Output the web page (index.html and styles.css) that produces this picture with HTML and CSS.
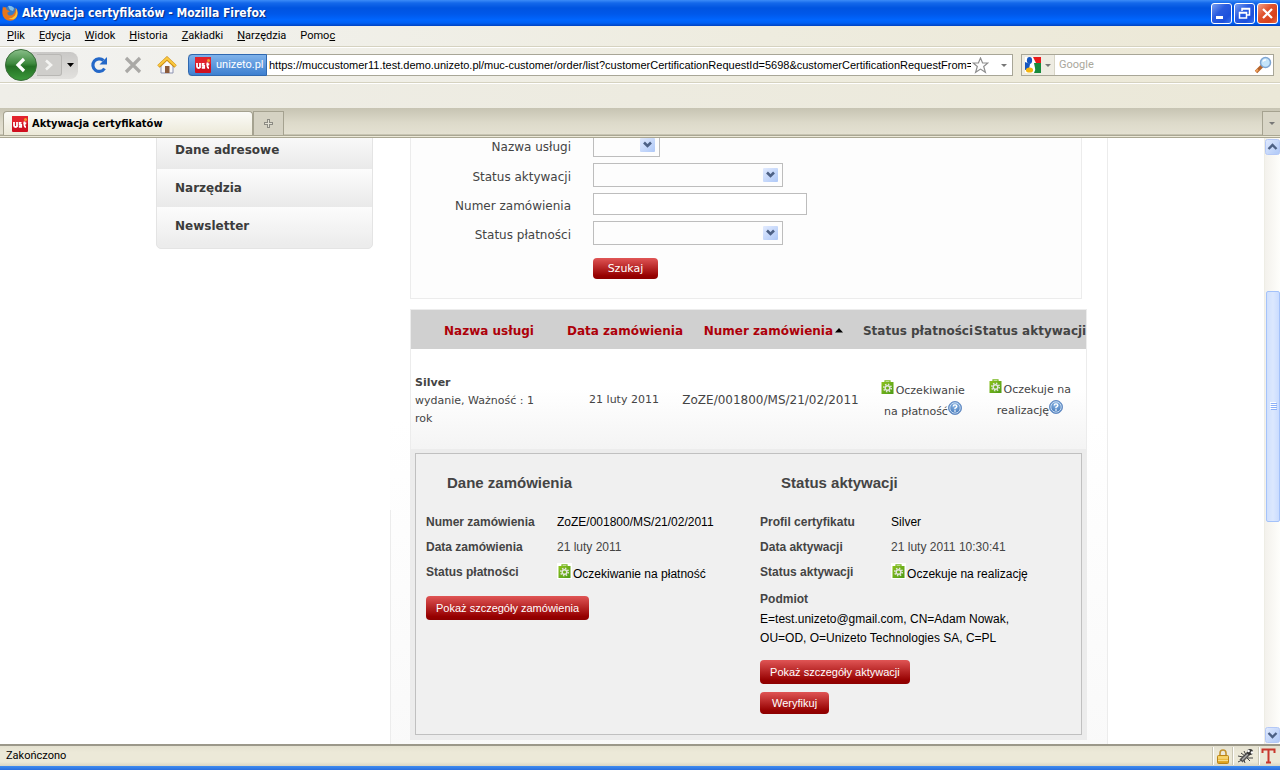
FILE: index.html
```html
<!DOCTYPE html>
<html lang="pl">
<head>
<meta charset="utf-8">
<title>Aktywacja certyfikatów</title>
<link rel="stylesheet" href="styles.css">
</head>
<body>
<svg class="defs" aria-hidden="true">
  <defs>
    <linearGradient id="gGreen" x1="0" y1="0" x2="0" y2="1"><stop offset="0" stop-color="#8abf8a"/><stop offset=".45" stop-color="#3f8a3f"/><stop offset=".55" stop-color="#247024"/><stop offset="1" stop-color="#3c9a3c"/></linearGradient>
    <linearGradient id="gSel" x1="0" y1="0" x2="1" y2="1"><stop offset="0" stop-color="#e1eafe"/><stop offset="1" stop-color="#aec8f7"/></linearGradient>
    <linearGradient id="gCase" x1="0" y1="0" x2="1" y2="1"><stop offset="0" stop-color="#8cc21c"/><stop offset="1" stop-color="#4c9a18"/></linearGradient>
    <radialGradient id="gHelp" cx=".5" cy=".3" r=".8"><stop offset="0" stop-color="#8fb9e6"/><stop offset="1" stop-color="#2f66ae"/></radialGradient>
    <linearGradient id="gLock" x1="0" y1="0" x2="0" y2="1"><stop offset="0" stop-color="#fbd967"/><stop offset="1" stop-color="#d99a18"/></linearGradient>
  </defs>
  <symbol id="drop" viewBox="0 0 15 14"><rect width="15" height="14" rx="1" fill="url(#gSel)"/><path d="M4 4.500l3.500 3.500 3.500-3.500" fill="none" stroke="#4d6185" stroke-width="2.600"/></symbol>
  <symbol id="uni" viewBox="0 0 16 16"><rect width="16" height="16" rx="1" fill="#cf1020"/><rect width="16" height="7" rx="1" fill="#e2222c"/><path d="M2 6v3.500q0 1.500 1.500 1.500T5 9.500V6v5M9.500 6.800H7.600V8.800H9.200V10.800H6.800M12.500 5.500v4q0 1.500 1.500 1.500M11.300 7.300h3" fill="none" stroke="#fff" stroke-width="1.800"/><circle cx="13.500" cy="3.500" r="1.500" fill="#f39a28"/></symbol>
  <symbol id="case" viewBox="0 0 13 14"><path d="M4 3V.8h5V3" fill="none" stroke="#78b820" stroke-width="1.200"/><rect x=".5" y="2" width="12" height="12" fill="url(#gCase)"/><circle cx="6.500" cy="8" r="3.700" fill="none" stroke="#e2e6dc" stroke-width="1.600" stroke-dasharray="1.450 1.450"/><circle cx="6.500" cy="8" r="2.300" fill="none" stroke="#e2e6dc" stroke-width="1.500"/></symbol>
  <symbol id="help" viewBox="0 0 14 14"><circle cx="7" cy="7" r="6.500" fill="url(#gHelp)" stroke="#6a8fc4"/><circle cx="7" cy="7" r="5.200" fill="none" stroke="#c8dcf2"/><path d="M5.200 5.500Q5.300 3.900 7 3.900t1.800 1.500Q8.800 6.400 7 7.300V8.200M7 9.300v1.400" fill="none" stroke="#fff" stroke-width="1.400"/></symbol>
</svg>

<header class="titlebar">
  <svg width="16" height="16" viewBox="0 0 16 16" aria-hidden="true"><circle cx="8" cy="7.500" r="6.500" fill="#3d7cc4"/><path d="M6 1q3-1 6 2l-1 3-3-1z" fill="#7fc0ee"/><path d="M1.500 2.500L1 1Q.2 5 .4 8.500A7.600 7.600 0 0 0 15.600 8Q15.600 4.500 13.500 2.500 14 6 12 8.500 10 11 7.500 10.500 5 10 5.500 7.500L8 6.500 4.500 4.500 3.500 2z" fill="#e8761c"/><path d="M13.500 2.500q1.600 4-.5 8-3 3.500-7 2.500 6 3.500 9-2 1.500-5-1.500-8.500z" fill="#f9c33a"/></svg>
  <h1 class="window-title">Aktywacja certyfikatów - Mozilla Firefox</h1>
  <div class="window-buttons">
    <button class="wbtn" aria-label="Minimalizuj"><svg width="19" height="19" viewBox="0 0 19 19"><path d="M4 13.500h7" stroke="#fff" stroke-width="3"/></svg></button>
    <button class="wbtn" aria-label="Przywróć"><svg width="19" height="19" viewBox="0 0 19 19" fill="none" stroke="#fff"><path d="M7 7V4.500h7.500V11H12M7 5h7.500M4.500 8.500h7V14h-7zM4.500 9h7" stroke-width="1.500"/></svg></button>
    <button class="wbtn wbtn-close" aria-label="Zamknij"><svg width="19" height="19" viewBox="0 0 19 19"><path d="M5 5l9 9M14 5l-9 9" stroke="#fff" stroke-width="2.200"/></svg></button>
  </div>
</header>

<nav class="menubar" aria-label="Menu">
  <button><u>P</u>lik</button><button><u>E</u>dycja</button><button><u>W</u>idok</button><button><u>H</u>istoria</button><button><u>Z</u>akładki</button><button><u>N</u>arzędzia</button><button>Pomo<u>c</u></button>
</nav>

<div class="toolbar">
  <div class="history">
    <button class="back" aria-label="Wstecz"><svg width="32" height="32" viewBox="0 0 32 32"><circle cx="16" cy="16" r="15.500" fill="url(#gGreen)" stroke="#3c6e3c"/><path d="M19 10l-6 6 6 6" fill="none" stroke="#fff" stroke-width="3.200"/></svg></button>
    <button class="forward" aria-label="Dalej"><svg width="12" height="14" viewBox="0 0 12 14"><path d="M3 2.500L8 7l-5 4.500" fill="none" stroke="#f4f4f2" stroke-width="2.600"/></svg></button>
    <button class="recent" aria-label="Ostatnie strony"><svg width="7" height="4" viewBox="0 0 7 4"><path d="M0 0h7L3.500 4z"/></svg></button>
  </div>
  <button class="tool" aria-label="Odśwież"><svg width="18" height="18" viewBox="0 0 18 18"><path d="M14.500 12.500A6.300 6.300 0 1 1 13.500 4.500" fill="none" stroke="#2468c8" stroke-width="3.200"/><path d="M17 1v7.500H9.500z" fill="#2468c8"/></svg></button>
  <button class="tool" aria-label="Zatrzymaj"><svg width="18" height="18" viewBox="0 0 18 18"><path d="M2 2l14 14M16 2L2 16" stroke="#aaa9a6" stroke-width="3.200"/></svg></button>
  <button class="tool" aria-label="Strona startowa"><svg width="20" height="18" viewBox="0 0 20 18"><path d="M4 9l6-6 6 6v8H4z" fill="#f7f7fb" stroke="#8d93b0"/><path d="M1.500 10.500L10 2.500l8.500 8" fill="none" stroke="#c98a12" stroke-width="3.600"/><path d="M1.500 10L10 2.300 18.500 10" fill="none" stroke="#fbc93f" stroke-width="2.200"/><rect x="8" y="10" width="4.500" height="7" fill="#8b5a3a"/></svg></button>
  <div class="urlbar">
    <button class="identity"><svg width="16" height="16" viewBox="0 0 16 16"><use href="#uni"/></svg>unizeto.pl</button>
    <input class="url" type="text" aria-label="Adres" value="https://muccustomer11.test.demo.unizeto.pl/muc-customer/order/list?customerCertificationRequestId=5698&amp;customerCertificationRequestFrom=">
    <svg width="17" height="17" viewBox="0 0 17 17" aria-hidden="true"><path d="M8.500 1l2.100 5h5.200l-4.100 3.500 1.700 5.800-4.900-3.200-4.900 3.200 1.700-5.800L1.200 6h5.200z" fill="#fdfdfd" stroke="#8e8e8e" stroke-width="1.200"/></svg>
    <svg width="6" height="3" viewBox="0 0 6 3" aria-hidden="true"><path d="M0 0h6L3 3z" fill="#777"/></svg>
  </div>
  <div class="searchbar">
    <button class="engine" aria-label="Wyszukiwarka"><svg width="16" height="16" viewBox="0 0 16 16"><path fill="#fff" d="M0 0h16v16H0z"/><path d="M8 0h8v6h-5z" fill="#e91a1a"/><path d="M9 6h7v10H9q2-3 1-5z" fill="#178a3c"/><path d="M0 5l5 2-1 5-4 1z" fill="#1456c0"/><ellipse cx="4.500" cy="3.500" rx="2.600" ry="3.400" fill="#1456c0"/><ellipse cx="4.500" cy="13" rx="3.600" ry="2.600" fill="#f6b50e"/></svg><svg width="6" height="3" viewBox="0 0 6 3"><path d="M0 0h6L3 3z" fill="#777"/></svg></button>
    <input type="text" aria-label="Szukaj w Google" placeholder="Google">
    <svg width="18" height="18" viewBox="0 0 18 18" aria-hidden="true"><path d="M2 16l6-6" stroke="#b5632a" stroke-width="3.400"/><path d="M2 15.500L4 13.500" stroke="#f0a05a" stroke-width="2"/><circle cx="11.500" cy="6.500" r="5" fill="#c4e4fa" stroke="#7fa6d2" stroke-width="1.500"/><path d="M9 5.500q1-2 3-1.500" stroke="#fff" fill="none" stroke-width="1.500"/></svg>
  </div>
</div>
<div class="bookmarks"></div>

<div class="tabs">
  <button class="tab"><svg width="16" height="16" viewBox="0 0 16 16"><use href="#uni"/></svg>Aktywacja certyfikatów</button>
  <button class="newtab" aria-label="Nowa karta"><svg width="9" height="9" viewBox="0 0 9 9"><path d="M4.500 0v9M0 4.500h9" stroke="#8c8b83" stroke-width="3"/><path d="M4.500 1v7M1 4.500h7" stroke="#e4e2d6"/></svg></button>
  <button class="alltabs" aria-label="Lista kart"><svg width="6" height="3" viewBox="0 0 6 3"><path d="M0 0h6L3 3z" fill="#777"/></svg></button>
</div>

<div class="viewport">
  <div class="page">
    <nav class="side" aria-label="Konto">
      <a href="#adres">Dane adresowe</a>
      <a href="#narzedzia">Narzędzia</a>
      <a href="#newsletter">Newsletter</a>
    </nav>
    <main class="main">
      <form class="search-form">
        <label for="usluga">Nazwa usługi</label>
        <span class="select select-s"><select id="usluga"><option></option></select><svg width="15" height="14"><use href="#drop"/></svg></span>
        <label for="aktywacja">Status aktywacji</label>
        <span class="select"><select id="aktywacja"><option></option></select><svg width="15" height="14"><use href="#drop"/></svg></span>
        <label for="numer">Numer zamówienia</label>
        <input id="numer" type="text">
        <label for="platnosc">Status płatności</label>
        <span class="select"><select id="platnosc"><option></option></select><svg width="15" height="14"><use href="#drop"/></svg></span>
        <button class="btn btn-search" type="button">Szukaj</button>
      </form>

      <table class="orders">
        <colgroup><col class="c-name"><col class="c-date"><col><col class="c-pay"><col class="c-act"></colgroup>
        <thead>
          <tr>
            <th><a href="#nazwa">Nazwa usługi</a></th>
            <th><a href="#data">Data zamówienia</a></th>
            <th class="sorted"><a href="#nr">Numer zamówienia</a> <svg width="8" height="5" viewBox="0 0 8 5"><path d="M0 4.500L4 0l4 4.500z"/></svg></th>
            <th>Status płatności</th>
            <th>Status aktywacji</th>
          </tr>
        </thead>
        <tbody>
          <tr class="order">
            <td class="name"><strong>Silver</strong><br>wydanie, Ważność : 1 rok</td>
            <td>21 luty 2011</td>
            <td class="number">ZoZE/001800/MS/21/02/2011</td>
            <td class="status payment"><svg class="case" width="13" height="14"><use href="#case"/></svg> Oczekiwanie<br>na płatność<svg class="help" width="14" height="14"><use href="#help"/></svg></td>
            <td class="status"><svg class="case" width="13" height="14"><use href="#case"/></svg> Oczekuje na<br>realizację<svg class="help" width="14" height="14"><use href="#help"/></svg></td>
          </tr>
          <tr class="detail-row">
            <td colspan="5">
              <div class="details">
                <section>
                  <h2>Dane zamówienia</h2>
                  <dl>
                    <dt>Numer zamówienia</dt><dd class="strong">ZoZE/001800/MS/21/02/2011</dd>
                    <dt>Data zamówienia</dt><dd>21 luty 2011</dd>
                    <dt>Status płatności</dt><dd class="strong"><span class="case-tile"><svg width="13" height="14"><use href="#case"/></svg></span><span class="case-text">Oczekiwanie na płatność</span></dd>
                  </dl>
                  <button class="btn btn-wide" type="button">Pokaż szczegóły zamówienia</button>
                </section>
                <section>
                  <h2>Status aktywacji</h2>
                  <dl>
                    <dt>Profil certyfikatu</dt><dd class="strong">Silver</dd>
                    <dt>Data aktywacji</dt><dd>21 luty 2011 10:30:41</dd>
                    <dt>Status aktywacji</dt><dd class="strong"><span class="case-tile"><svg width="13" height="14"><use href="#case"/></svg></span><span class="case-text">Oczekuje na realizację</span></dd>
                  </dl>
                  <h3>Podmiot</h3>
                  <p>E=test.unizeto@gmail.com, CN=Adam Nowak,<br>OU=OD, O=Unizeto Technologies SA, C=PL</p>
                  <button class="btn btn-wide" type="button">Pokaż szczegóły aktywacji</button>
                  <button class="btn btn-verify" type="button">Weryfikuj</button>
                </section>
              </div>
            </td>
          </tr>
        </tbody>
      </table>
    </main>
  </div>
  <div class="scrollbar" aria-hidden="true">
    <svg class="up" width="15" height="16" viewBox="0 0 15 16"><rect x=".5" y=".5" width="14" height="15" rx="2" fill="url(#gSel)" stroke="#b4c8f6"/><path d="M3.500 10l4-4 4 4" fill="none" stroke="#4d6185" stroke-width="2.400"/></svg>
    <div class="track">
      <div class="space-above"></div>
      <div class="thumb"><svg width="7" height="8" viewBox="0 0 7 8"><path d="M0 .5h6M0 2.500h6M0 4.500h6M0 6.500h6" stroke="#fff"/><path d="M1 1.500h6M1 3.500h6M1 5.500h6M1 7.500h6" stroke="#8cb0f8"/></svg></div>
      <div class="space-below"></div>
    </div>
    <svg width="15" height="16" viewBox="0 0 15 16"><rect x=".5" y=".5" width="14" height="15" rx="2" fill="url(#gSel)" stroke="#b4c8f6"/><path d="M3.500 6l4 4 4-4" fill="none" stroke="#4d6185" stroke-width="2.400"/></svg>
  </div>
</div>

<footer class="statusbar">
  <span class="message">Zakończono</span>
  <span class="cell"><svg width="12" height="15" viewBox="0 0 12 15"><path d="M3 7V4q0-3 3-3t3 3v3" fill="none" stroke="#c29330" stroke-width="1.600"/><rect x=".5" y="6.500" width="11" height="8" rx="1" fill="url(#gLock)" stroke="#b98318"/><path d="M1 9h10M1 11.500h10" stroke="#f8dc8a"/></svg></span>
  <span class="cell cell-bug"><svg width="18" height="17" viewBox="0 0 18 17"><path d="M4 13L12 5" stroke="#555" stroke-width="4.500"/><path d="M5 12l6-6" stroke="#aaa" stroke-width="1.500"/><path d="M1 8l5 1M4 5l4 3M8 15l-1-3M13 13l-3-3M10 10h6M7 3l2 4M1 14l4-2" stroke="#444" fill="none"/><circle cx="13" cy="4" r="3" fill="#333"/><circle cx="11.500" cy="3" r="1.300" fill="#fff"/><circle cx="15" cy="4.500" r="1.300" fill="#fff"/></svg></span>
  <span class="cell"><svg width="15" height="16" viewBox="0 0 15 16"><path d="M1.500 5V1.500h12V5M7.500 1.500v13M5 14.500h5" fill="none" stroke="#c8372d" stroke-width="2"/></svg></span>
</footer>
<div class="taskbar"></div>
</body>
</html>
```
FILE: styles.css
```css
* { box-sizing: border-box; }
html, body { height: 100%; margin: 0; }
body {
  display: flex;
  flex-direction: column;
  overflow: hidden;
  background: #fff;
  color: #444;
  font: 12px/18px "DejaVu Sans", Verdana, sans-serif;
}
button, input, select { margin: 0; padding: 0; border: 0; font: inherit; color: inherit; background: none; outline: 0; }
svg { display: block; flex: none; }
.defs { position: absolute; width: 0; height: 0; }

/* window frame */
.titlebar {
  flex: none;
  display: flex;
  align-items: center;
  gap: 4px;
  height: 26px;
  padding: 0 2px;
  background: linear-gradient(#3c8cf8 0, #1468ea 3px, #0054e0 8px, #0058ea 14px, #0066ff 20px, #0060f4 23px, #0042c0 100%);
}
.window-title { flex: 1; margin: 0; color: #fff; font: bold 12px/16px "DejaVu Sans Condensed", Tahoma, sans-serif; text-shadow: 1px 1px 1px #0a2a80; white-space: nowrap; }
.window-buttons { display: flex; gap: 2px; }
.wbtn { width: 21px; height: 21px; border: 1px solid #fff; border-radius: 3px; background: linear-gradient(135deg, #7a9ff0, #2a5ce0 40%, #1c50dc 75%, #3a74ee); }
.wbtn-close { background: linear-gradient(135deg, #f0a08a, #e0532e 40%, #d8421c 75%, #e86a48); }

.menubar, .toolbar {
  flex: none;
  display: flex;
  align-items: center;
  border-bottom: 1px solid #d5d2c0;
  background: linear-gradient(90deg, #f2f2f0, #eeecdf 60%, #ece8d6);
  color: #000;
  font: 11px/14px Roboto, Tahoma, sans-serif;
}
.menubar { gap: 14px; height: 21px; padding: 0 7px; }
.toolbar { gap: 8px; height: 36px; padding: 0 6px 0 5px; border-top: 1px solid #fff; }
.history { display: flex; align-items: center; width: 73px; height: 27px; border-radius: 14px 8px 8px 14px; background: linear-gradient(#c9c8c6, #e2e1de); }
.back { width: 32px; height: 32px; }
.forward { display: flex; align-items: center; justify-content: center; width: 25px; height: 22px; border: 1px solid #b8b7b4; border-left: 0; border-radius: 0 3px 3px 0; background: #cfcecb; }
.recent { display: flex; justify-content: center; flex: 1; }
.tool { display: flex; justify-content: center; width: 26px; }
.urlbar, .searchbar { display: flex; align-items: center; height: 22px; border: 1px solid #a8a697; background: #fff; }
.urlbar { flex: 1; gap: 12px; padding-right: 5px; border-left: 0; border-radius: 4px 0 0 4px; }
.identity { display: flex; align-items: center; gap: 5px; flex: none; width: 79px; height: 22px; padding-left: 6px; border: 1px solid #2f68b0; border-radius: 4px 0 0 4px; background: linear-gradient(#7fb2ea, #3d7fd0); color: #fff; white-space: nowrap; }
.url { flex: 1; min-width: 0; margin: 0 -11px 0 -10px; font-family: "Liberation Sans", Arial, sans-serif; }
.searchbar { flex: none; width: 20%; max-width: 253px; padding-right: 1px; }
.searchbar input { flex: 1; min-width: 0; padding-left: 4px; }
.searchbar input::placeholder { color: #aaa79c; opacity: 1; }
.engine { display: flex; align-items: center; gap: 4px; width: 33px; height: 20px; padding-left: 3px; border-right: 1px solid #d8d5c6; background: #eeece2; }
.bookmarks { flex: none; height: 25px; border-top: 1px solid #fff; background: linear-gradient(90deg, #efeee8, #ebe8d8); }

.tabs {
  flex: none;
  display: flex;
  align-items: flex-end;
  height: 30px;
  padding: 3px 0 2px 3px;
  border-bottom: 1px solid #aaa793;
  background: linear-gradient(#c7c4b3, #dddaca 15px, #e4e1d2 26px, #aaa793 27px, #aaa793 28px, #ece9d8 28px);
  color: #000;
}
.tabs button { display: flex; align-items: center; height: 24px; border: 1px solid #a5a290; border-bottom: 0; }
.tabs .tab { width: 250px; padding-left: 8px; gap: 4px; border-radius: 4px 4px 0 0; background: linear-gradient(#fbfbf8, #ece9d8); font: bold 11px/14px "DejaVu Sans Condensed", Tahoma, sans-serif; white-space: nowrap; }
.tabs .newtab { width: 31px; justify-content: center; background: #d5d2c3; }
.tabs .alltabs { width: 18px; margin-left: auto; justify-content: center; border-right: 0; background: #d9d6c7; }

/* browser viewport */
.viewport { flex: 1; min-height: 0; display: flex; overflow: hidden; }
.page { flex: 1; display: flex; align-items: flex-start; max-width: 952px; min-width: 0; margin: 0 auto; }
.side { flex: none; width: 217px; margin-top: -8px; border: 1px solid #e4e4e4; border-radius: 0 0 5px 5px; overflow: hidden; background: #ececec; padding-bottom: 3px; }
.side a { display: block; padding: 10px 18px; background: linear-gradient(#fcfcfc, #e9e9e9); color: #3c3c3c; font-weight: bold; text-decoration: none; }
.side a:last-child { background: linear-gradient(#fcfcfc, #ececec); }

.main {
  flex: 1;
  min-width: 0;
  margin-left: 17px;
  padding: 0 20px 16px;
  border-right: 1px solid #ececec;
  background: linear-gradient(#ececec, #ececec) no-repeat 0 372px / 1px 100%, linear-gradient(#fff 280px, #f9f9f9);
}
.search-form {
  display: grid;
  grid-template-columns: 160px 1fr;
  justify-items: start;
  align-items: center;
  gap: 6px 22px;
  margin: -5px 5px 10px 0;
  padding-bottom: 19px;
  border: 1px solid #ececec;
  border-top: 0;
  background: #fdfdfd;
}
.search-form label { justify-self: end; padding-top: 3px; }
.select { position: relative; display: block; width: 190px; height: 24px; }
.select-s { width: 67px; }
.select select { width: 100%; height: 24px; appearance: none; border: 1px solid #bdbdbd; }
.select svg { position: absolute; right: 5px; top: 5px; pointer-events: none; }
.search-form input { width: 214px; height: 22px; border: 1px solid #bdbdbd; background: #fff; }
.btn { display: block; border-radius: 4px; background: linear-gradient(#e05555, #960000 85%, #8c0000); color: #fff; font: 11px/22px "Liberation Sans", Arial, sans-serif; white-space: nowrap; }
.btn-search { grid-column: 2; width: 65px; margin-top: 7px; font: 11px/21px "DejaVu Sans", Verdana, sans-serif; }

.orders { border: 1px solid #ececec; border-collapse: separate; border-spacing: 0; table-layout: fixed; }
.main .orders { width: 677px; max-width: 100%; }
.c-name { width: 156px; }
.c-date { width: 114px; }
.c-pay { width: 112px; }
.c-act { width: 112px; }
.orders th { height: 39px; padding: 3px 0 0; background: #d0d0d0; text-align: center; white-space: nowrap; }
.orders .sorted { padding-left: 4px; }
.orders th a { color: #ad0009; text-decoration: none; }
.orders th svg { display: inline-block; vertical-align: 2px; margin-left: -2px; }
.order td { height: 100px; padding: 2px 0 0; background: linear-gradient(#fff 40%, #f4f4f4); font-size: 11px; text-align: center; vertical-align: middle; }
.order .name { padding: 3px 24px 0 4px; text-align: left; }
.order .number { padding-right: 2px; font-size: 12px; }
.order .status { padding-top: 2px; line-height: 20px; white-space: nowrap; }
.order .payment { padding-top: 4px; padding-left: 10px; }
.order .status svg { display: inline-block; }
.order .case { vertical-align: 0; margin-right: -2px; }
.order .help { vertical-align: 0; }
.detail-row > td { padding: 4px; background: #ececec; }

.details { display: grid; grid-template-columns: 51fr 49fr; min-height: 282px; padding: 19px 0 20px 10px; border: 1px solid #c0c0c0; background: #f0f0f0; font: 12px/19px "Liberation Sans", Arial, sans-serif; }
.details section { display: flex; flex-direction: column; align-items: flex-start; }
.details h2 { margin: 0 0 18px; padding-left: 21px; font-size: 15px; line-height: 19px; }
.details dl { display: grid; grid-template-columns: 131px 1fr; margin: 0; line-height: 25px; white-space: nowrap; }
.details dt, .details h3 { font-weight: bold; }
.details dd { display: flex; align-items: center; height: 25px; margin: 0; }
.details .strong, .details p { color: #000; }
.details h3 { margin: 5px 0 0; font-size: 12px; line-height: 19px; }
.details p { margin: 1px 0 12px; }
.case-tile { padding: 1px; margin: 0 1px 4px 0; background: #fff; }
.case-text { padding-top: 4px; }
.btn-wide { padding: 1px 10px; }
.btn-verify { margin-top: 8px; padding: 0 12px; }
.details dl + .btn { margin-top: 11px; }

.scrollbar { flex: none; display: flex; flex-direction: column; align-items: center; width: 16px; padding: 1px 0; border-left: 1px solid #eeede5; background: linear-gradient(90deg, #f3f1ec, #fefefb); }
.track { flex: 1; display: flex; flex-direction: column; width: 100%; }
.space-above { flex: 136; }
.space-below { flex: 206; }
.thumb { flex: 230; display: flex; align-items: center; justify-content: center; margin-left: 1px; border: 1px solid #a4c2fa; border-radius: 2px; background: linear-gradient(90deg, #d0e0fd, #dce8fe 50%, #cadcff); }

.statusbar { flex: none; display: flex; align-items: center; height: 22px; padding-right: 2px; border-top: 2px solid #9b988a; background: linear-gradient(#e4e1d0, #ece9d8 6px, #ece9d8 16px, #d8d5c4); color: #000; font: 11px/14px Roboto, Tahoma, sans-serif; }
.message { flex: 1; padding-left: 6px; }
.cell { display: flex; align-items: center; justify-content: center; width: 20px; height: 18px; border-left: 1px solid #c9c6b4; box-shadow: inset 1px 0 #fff; }
.cell-bug { width: 26px; }
.taskbar { flex: none; height: 4px; background: linear-gradient(#3f8cf0, #2a6ede); }
```
